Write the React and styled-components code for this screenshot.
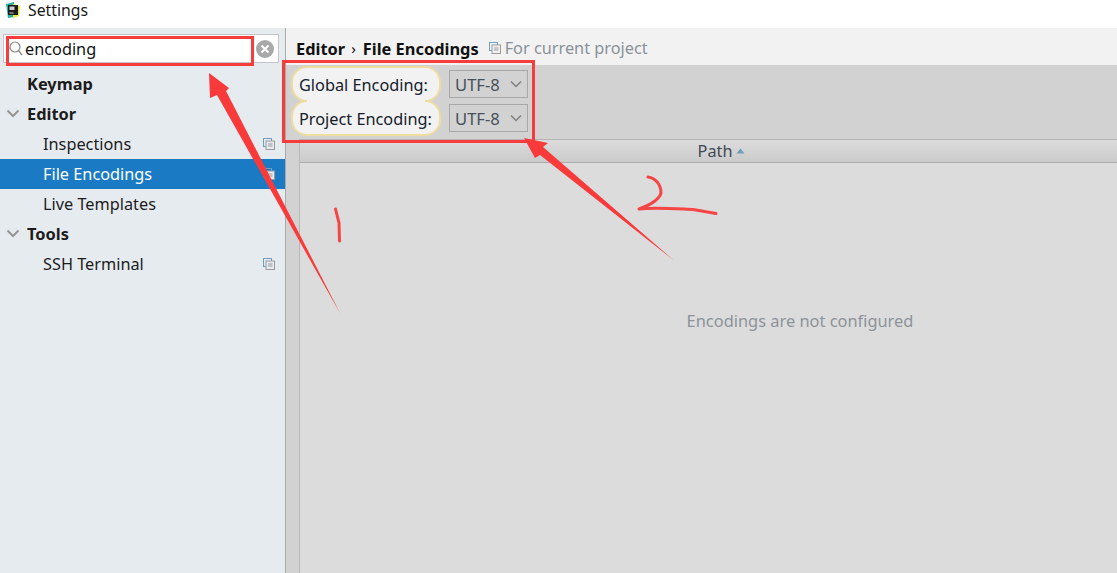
import React from 'react';
import styled, { createGlobalStyle } from 'styled-components';

const Global = createGlobalStyle`
  html, body { margin: 0; padding: 0; background: #fff; overflow: hidden; }
  body { font-family: "Noto Sans", "Open Sans", sans-serif; }
`;

const Frame = styled.div`
  position: relative;
  width: 1117px;
  height: 573px;
  overflow: hidden;
  display: flex;
  flex-direction: column;
`;

const TitleBar = styled.div`
  height: 19px;
  flex: none;
  padding: 0 0 9px 5px;
  display: flex;
  align-items: center;
  gap: 7px;
  background: #fff;
  font-size: 15.8px;
  color: #1a1a1a;
`;

const Body = styled.div`
  flex: 1;
  display: flex;
  min-height: 0;
`;

const Sidebar = styled.aside`
  width: 285px;
  flex: none;
  background: #e6ebf0;
  border-right: 1px solid #a9a9a9;
`;

const SearchBox = styled.div`
  margin: 6px 6px 6px 3px;
  height: 29px;
  box-sizing: border-box;
  background: #fff;
  border: 1px solid #c4c4c4;
  display: flex;
  align-items: center;
  padding: 0 4px 0 4px;
  font-size: 16.3px;
  color: #111;
`;

const SearchText = styled.span`
  flex: 1;
  margin-left: 1px;
`;

const Row = styled.div`
  height: 30px;
  display: flex;
  align-items: center;
  position: relative;
  box-sizing: border-box;
  padding-left: ${(p) => (p.$child ? 43 : 27)}px;
  padding-bottom: ${(p) => (p.$bold ? 2 : 0)}px;
  font-size: ${(p) => (p.$bold ? 16.4 : 16.3)}px;
  font-weight: ${(p) => (p.$bold ? 700 : 400)};
  color: ${(p) => (p.$selected ? '#fff' : '#1c1c1c')};
  background: ${(p) => (p.$selected ? '#1a7bc4' : 'transparent')};
`;

const Chevron = styled.svg`
  position: absolute;
  left: 6px;
  top: 10px;
`;

const CopyWrap = styled.svg`
  margin-left: ${(p) => (p.$inline ? '10px' : 'auto')};
  margin-right: ${(p) => (p.$inline ? '0' : '10px')};
  flex: none;
`;

const Main = styled.main`
  flex: 1;
  display: flex;
  flex-direction: column;
  min-width: 0;
`;

const Crumbs = styled.div`
  height: 37px;
  flex: none;
  background: #f2f2f2;
  display: flex;
  align-items: center;
  padding: 3px 0 0 10px;
  box-sizing: border-box;
  font-size: 16.4px;
  font-weight: 700;
  color: #111;
`;

const Sep = styled.span`
  font-weight: 400;
  margin: 0 7px 0 6px;
  font-size: 15px;
`;

const Hint = styled.span`
  font-weight: 400;
  font-size: 16.3px;
  color: #8b9198;
  margin-left: 4px;
`;

const Content = styled.div`
  flex: 1;
  background: #d2d2d2;
  display: flex;
  flex-direction: column;
  min-height: 0;
`;

const Options = styled.div`
  height: 73px;
  flex: none;
  padding: 2px 0 0 5px;
  box-sizing: border-box;
  display: flex;
  flex-direction: column;
`;

const OptionRow = styled.div`
  height: 34px;
  flex: none;
  display: flex;
  align-items: center;
`;

const Label = styled.div`
  position: relative;
  width: 150px;
  height: 36px;
  box-sizing: border-box;
  background: #f2f2f2;
  border: 2px solid #efdc9f;
  border-radius: 16px;
  display: flex;
  align-items: center;
  padding: 2px 0 0 6px;
  font-size: 16.3px;
  color: #15202b;
  margin-right: 8px;
  flex: none;

  /* joins the two bubbles into one shape */
  &::before {
    content: ${(p) => (p.$joined ? "''" : 'none')};
    position: absolute;
    left: 14px;
    right: 14px;
    top: -5px;
    height: 8px;
    background: #f2f2f2;
  }
`;

const Select = styled.div`
  width: 79px;
  height: 28px;
  box-sizing: border-box;
  border: 1px solid #a8a8a8;
  background: #d2d2d2;
  display: flex;
  align-items: center;
  justify-content: space-between;
  padding: 0 5px 0 5px;
  font-size: 16.6px;
  color: #47505a;
`;

const Table = styled.div`
  flex: 1;
  margin-left: 13px;
  margin-top: 1px;
  border-left: 1px solid #b8b8b8;
  border-top: 1px solid #b4b4b4;
  background: #dcdcdc;
  display: flex;
  flex-direction: column;
  min-height: 0;
`;

const TableHead = styled.div`
  height: 22px;
  flex: none;
  background: linear-gradient(#dcdcdc, #cbcbcb);
  border-bottom: 1px solid #aeaeae;
  display: flex;
  align-items: center;
  justify-content: center;
  gap: 4px;
  padding-left: 26px;
  font-size: 16.3px;
  color: #3f4a55;
`;

const TableBody = styled.div`
  flex: 1;
  display: flex;
  justify-content: center;
  padding: 146px 0 0 183px;
  font-size: 16.4px;
  color: #8d9399;
`;

const Overlay = styled.svg`
  position: absolute;
  left: 0;
  top: 0;
  pointer-events: none;
`;

const CopyIcon = ({ inline, bg = '#e6ebf0' }) => (
  <CopyWrap $inline={inline} width="12" height="12" viewBox="0 0 12 12">
    <rect x="0.5" y="0.5" width="8" height="8" fill="none" stroke="#6f9fc4" />
    <rect x="3" y="3" width="8.5" height="8.5" fill={bg} stroke="#9a9a9a" />
    <path d="M5 6h4.5M5 8h4.5" stroke="#9a9a9a" />
  </CopyWrap>
);

const Arrow = () => (
  <Chevron width="14" height="10" viewBox="0 0 14 10">
    <path d="M1.5 1.5L7 7l5.5-5.5" fill="none" stroke="#959595" strokeWidth="2" />
  </Chevron>
);

const SmallChevron = () => (
  <svg width="12" height="8" viewBox="0 0 12 8">
    <path d="M1 1.5L6 6.5l5-5" fill="none" stroke="#808080" strokeWidth="1.5" />
  </svg>
);

const Logo = () => (
  <svg width="16" height="16" viewBox="0 0 16 16">
    <path d="M1 2l8-2 1 15-7 1z" fill="#27b3a0" />
    <path d="M8 2l7 2-1 10-6 2z" fill="#e6e83c" />
    <rect x="3" y="3" width="10" height="10" fill="#1c1c1c" />
    <rect x="4.5" y="4.5" width="5" height="3.5" fill="#cfcfcf" />
    <rect x="4.5" y="10.5" width="4" height="1" fill="#cfcfcf" />
  </svg>
);

export default function App() {
  return (
    <Frame>
      <Global />
      <TitleBar>
        <Logo />
        <span>Settings</span>
      </TitleBar>
      <Body>
        <Sidebar>
          <SearchBox>
            <svg width="16" height="17" viewBox="0 0 16 17">
              <path d="M0 7l2 2" stroke="#b5b5b5" strokeWidth="1.2" />
              <circle cx="7" cy="7" r="5" fill="none" stroke="#8a8a8a" strokeWidth="1.2" />
              <path d="M10.5 10.5L14 15" stroke="#8a8a8a" strokeWidth="1.4" />
            </svg>
            <SearchText>encoding</SearchText>
            <svg width="18" height="18" viewBox="0 0 18 18">
              <circle cx="9" cy="9" r="9" fill="#a9a9a9" />
              <path d="M5.5 5.5l7 7M12.5 5.5l-7 7" stroke="#fff" strokeWidth="2" />
            </svg>
          </SearchBox>
          <Row $bold>Keymap</Row>
          <Row $bold><Arrow />Editor</Row>
          <Row $child>Inspections<CopyIcon /></Row>
          <Row $child $selected>File Encodings<CopyIcon /></Row>
          <Row $child>Live Templates</Row>
          <Row $bold><Arrow />Tools</Row>
          <Row $child>SSH Terminal<CopyIcon /></Row>
        </Sidebar>
        <Main>
          <Crumbs>
            Editor<Sep>›</Sep>File Encodings
            <CopyIcon inline bg="#f2f2f2" />
            <Hint>For current project</Hint>
          </Crumbs>
          <Content>
            <Options>
              <OptionRow>
                <Label>Global Encoding:</Label>
                <Select>UTF-8<SmallChevron /></Select>
              </OptionRow>
              <OptionRow>
                <Label $joined>Project Encoding:</Label>
                <Select>UTF-8<SmallChevron /></Select>
              </OptionRow>
            </Options>
            <Table>
              <TableHead>
                Path
                <svg width="9" height="6" viewBox="0 0 9 6"><path d="M0.5 5.5L4.5 0.5l4 5z" fill="#6f9fb8" /></svg>
              </TableHead>
              <TableBody>Encodings are not configured</TableBody>
            </Table>
          </Content>
        </Main>
      </Body>
      <Overlay width="1117" height="573" viewBox="0 0 1117 573">
        <rect x="7.5" y="37.5" width="245" height="27" fill="none" stroke="#f63c3c" strokeWidth="3" />
        <rect x="283.5" y="61.5" width="250" height="80" fill="none" stroke="#f63c3c" strokeWidth="3" />
        <path d="M340.5 314L226 91L229 88L209 73L210 98L217 95z" fill="#f83a3a" />
        <path d="M674 260.5L543 147L548 143L524 138L535 158L540 155z" fill="#f83a3a" />
        <path d="M335.5 209L339 223L339.5 241" fill="none" stroke="#f64545" strokeWidth="3" strokeLinecap="round" />
        <path d="M648 177C656 178 661 185 661 193C659 200 650 205 639 209C655 207 680 209 693 209.5L716 213.5" fill="none" stroke="#f64545" strokeWidth="3" strokeLinecap="round" strokeLinejoin="round" />
      </Overlay>
    </Frame>
  );
}
